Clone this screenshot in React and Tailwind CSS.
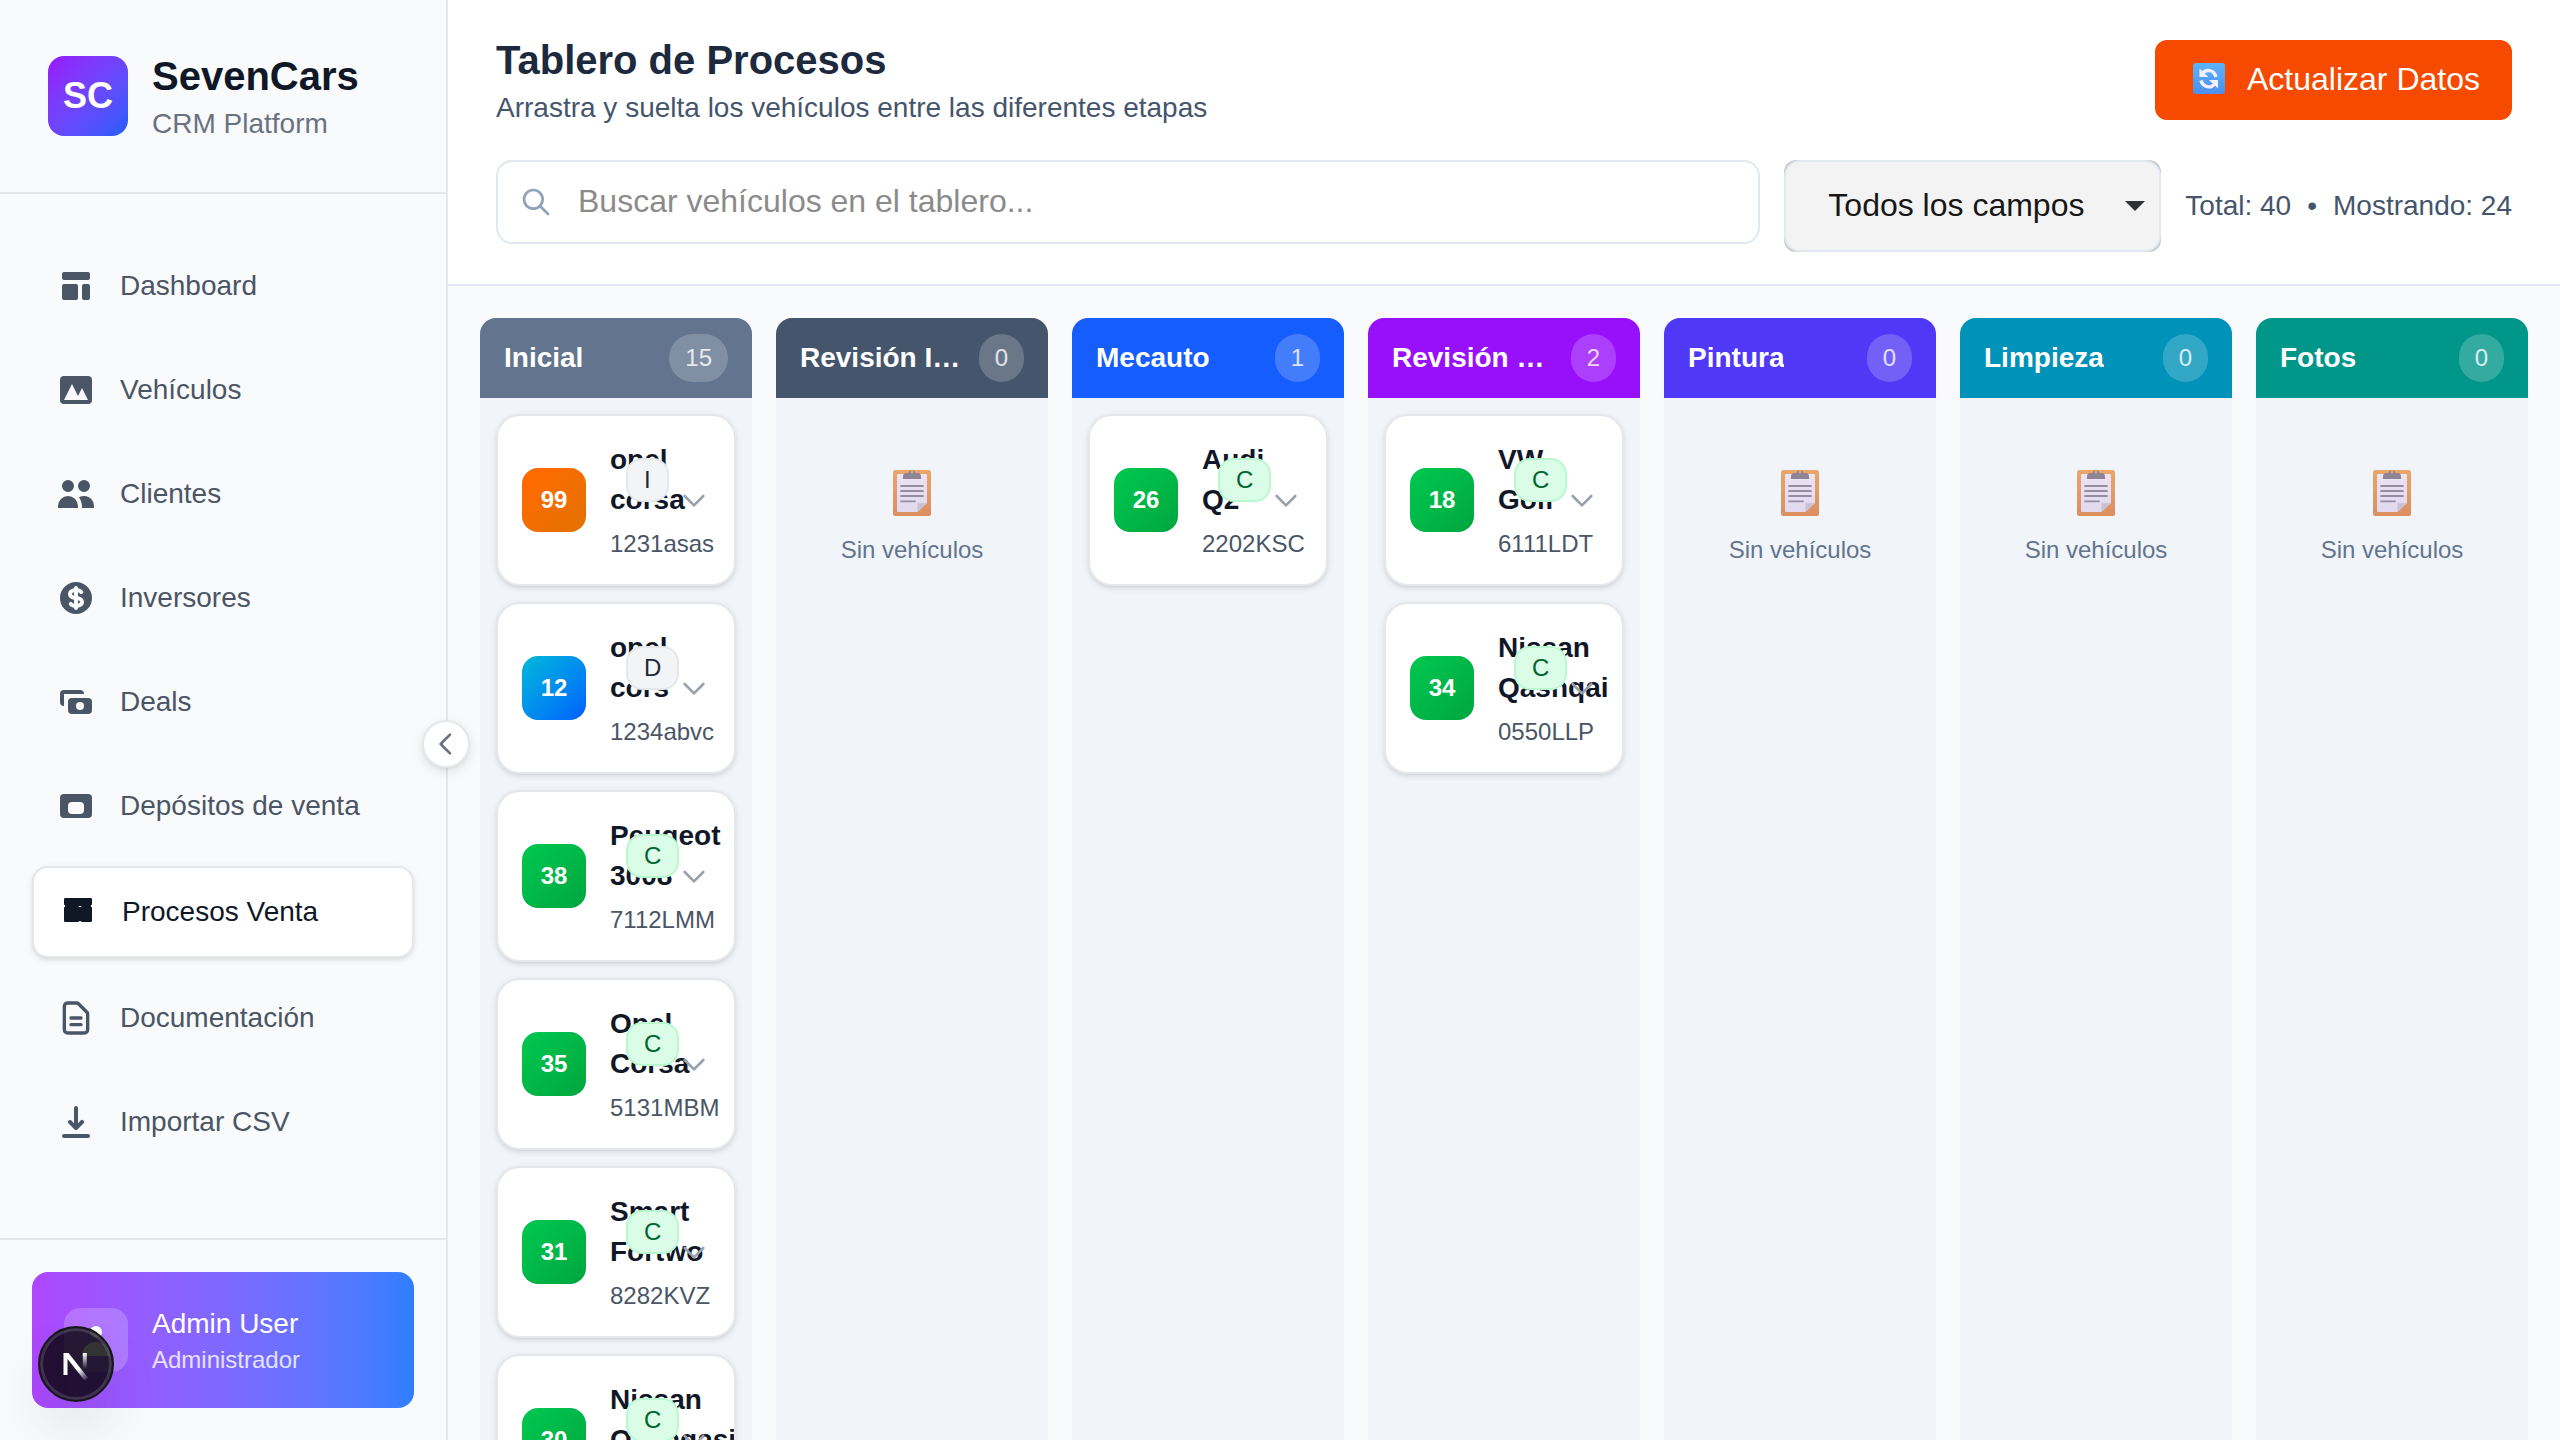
const NAV = [
  {
    label: "Dashboard",
    icon: (
      <path d="M3 4a1 1 0 011-1h12a1 1 0 011 1v2a1 1 0 01-1 1H4a1 1 0 01-1-1V4zM3 10a1 1 0 011-1h6a1 1 0 011 1v6a1 1 0 01-1 1H4a1 1 0 01-1-1v-6zM14 9a1 1 0 00-1 1v6a1 1 0 001 1h2a1 1 0 001-1v-6a1 1 0 00-1-1h-2z" />
    ),
  },
  {
    label: "Vehículos",
    icon: (
      <path
        fillRule="evenodd"
        d="M4 3a2 2 0 00-2 2v10a2 2 0 002 2h12a2 2 0 002-2V5a2 2 0 00-2-2H4zm12 12H4l4-8 3 6 2-4 3 6z"
      />
    ),
  },
  {
    label: "Clientes",
    icon: (
      <path d="M9 6a3 3 0 11-6 0 3 3 0 016 0zM17 6a3 3 0 11-6 0 3 3 0 016 0zM12.93 17c.046-.327.07-.66.07-1a6.97 6.97 0 00-1.5-4.33A5 5 0 0119 16v1h-6.07zM6 11a5 5 0 015 5v1H1v-1a5 5 0 015-5z" />
    ),
  },
  {
    label: "Inversores",
    icon: (
      <>
        <path d="M8.433 7.418c.155-.103.346-.196.567-.267v1.698a2.305 2.305 0 01-.567-.267C8.07 8.34 8 8.114 8 8c0-.114.07-.34.433-.582zM11 12.849v-1.698c.22.071.412.164.567.267.364.243.433.468.433.582 0 .114-.07.34-.433.582a2.305 2.305 0 01-.567.267z" />
        <path
          fillRule="evenodd"
          d="M10 18a8 8 0 100-16 8 8 0 000 16zm1-13a1 1 0 10-2 0v.092a4.535 4.535 0 00-1.676.662C6.602 6.234 6 7.009 6 8c0 .99.602 1.765 1.324 2.246.48.32 1.054.545 1.676.662v1.941c-.391-.127-.68-.317-.843-.504a1 1 0 10-1.51 1.31c.562.649 1.413 1.076 2.353 1.253V15a1 1 0 102 0v-.092a4.535 4.535 0 001.676-.662C13.398 13.766 14 12.991 14 12c0-.99-.602-1.765-1.324-2.246A4.535 4.535 0 0011 9.092V7.151c.391.127.68.317.843.504a1 1 0 101.511-1.31c-.563-.649-1.413-1.076-2.354-1.253V5z"
        />
      </>
    ),
  },
  {
    label: "Deals",
    icon: (
      <path
        fillRule="evenodd"
        d="M4 4a2 2 0 00-2 2v4a2 2 0 002 2V6h10a2 2 0 00-2-2H4zm2 6a2 2 0 012-2h8a2 2 0 012 2v4a2 2 0 01-2 2H8a2 2 0 01-2-2v-4zm6 4a2 2 0 100-4 2 2 0 000 4z"
      />
    ),
  },
  {
    label: "Depósitos de venta",
    icon: (
      <path
        fillRule="evenodd"
        d="M4 4a2 2 0 00-2 2v8a2 2 0 002 2h12a2 2 0 002-2V6a2 2 0 00-2-2H4zm4 4h4a2 2 0 012 2v2a2 2 0 01-2 2H8a2 2 0 01-2-2v-2a2 2 0 012-2z"
      />
    ),
  },
  {
    label: "Procesos Venta",
    active: true,
    icon: (
      <path
        fillRule="evenodd"
        d="M3.6 3h12.8a.6.6 0 01.6.6v2.8a.6.6 0 000 1.200v6.800a.6.6 0 01-.6.6h-4.700a.7.5 0 00-1.400 0H3.600a.6.6 0 01-.6-.6V7.600a.6.6 0 000-1.200V3.600a.6.6 0 01.6-.6zM10.200 7a.8.5 0 001.600 0z"
      />
    ),
  },
  {
    label: "Documentación",
    outline: true,
    icon: (
      <path d="M9 12h6m-6 4h6m2 5H7a2 2 0 01-2-2V5a2 2 0 012-2h5.586a1 1 0 01.707.293l5.414 5.414a1 1 0 01.293.707V19a2 2 0 01-2 2z" />
    ),
  },
  {
    label: "Importar CSV",
    icon: (
      <path
        fillRule="evenodd"
        d="M3 17a1 1 0 011-1h12a1 1 0 110 2H4a1 1 0 01-1-1zm3.293-7.707a1 1 0 011.414 0L9 10.586V3a1 1 0 112 0v7.586l1.293-1.293a1 1 0 111.414 1.414l-3 3a1 1 0 01-1.414 0l-3-3a1 1 0 010-1.414z"
      />
    ),
  },
];

const ORANGE = "from-orange-500 to-amber-600";
const CYAN = "from-cyan-500 to-blue-600";
const GREEN = "from-green-500 to-green-600";

const COLUMNS = [
  {
    title: "Inicial",
    count: 15,
    color: "bg-slate-500",
    cards: [
      { n: 99, name: "opel corsa", plate: "1231asas", status: "I", tone: ORANGE },
      { n: 12, name: "opel cors", plate: "1234abvc", status: "D", tone: CYAN },
      { n: 38, name: "Peugeot 3008", plate: "7112LMM", status: "C", tone: GREEN },
      { n: 35, name: "Opel Corsa", plate: "5131MBM", status: "C", tone: GREEN },
      { n: 31, name: "Smart Fortwo", plate: "8282KVZ", status: "C", tone: GREEN },
      { n: 30, name: "Nissan Qashqasi", plate: "4590LKM", status: "C", tone: GREEN },
    ],
  },
  { title: "Revisión Inicial", count: 0, color: "bg-slate-600", cards: [] },
  {
    title: "Mecauto",
    count: 1,
    color: "bg-blue-600",
    cards: [{ n: 26, name: "Audi Q2", plate: "2202KSC", status: "C", tone: GREEN }],
  },
  {
    title: "Revisión Mecánica",
    count: 2,
    color: "bg-purple-600",
    cards: [
      { n: 18, name: "VW Golf", plate: "6111LDT", status: "C", tone: GREEN },
      { n: 34, name: "Nissan Qashqai", plate: "0550LLP", status: "C", tone: GREEN },
    ],
  },
  { title: "Pintura", count: 0, color: "bg-indigo-600", cards: [] },
  { title: "Limpieza", count: 0, color: "bg-cyan-600", cards: [] },
  { title: "Fotos", count: 0, color: "bg-teal-600", cards: [] },
];

function StrokeIcon({ d, className }) {
  return (
    <svg
      viewBox="0 0 24 24"
      fill="none"
      stroke="currentColor"
      strokeWidth="2"
      strokeLinecap="round"
      strokeLinejoin="round"
      className={className}
      aria-hidden="true"
    >
      <path d={d} />
    </svg>
  );
}

function NavItem({ item }) {
  return (
    <a
      href="#"
      className={
        item.active
          ? "flex items-center gap-6 rounded-2xl border-2 border-gray-200 bg-white p-6 text-gray-900 shadow-[0_2px_6px_rgba(0,0,0,0.1),0_2px_4px_-2px_rgba(0,0,0,0.1)]"
          : "flex items-center gap-6 rounded-2xl p-6 text-gray-600"
      }
    >
      {item.outline ? (
        <svg
          viewBox="0 0 24 24"
          fill="none"
          stroke="currentColor"
          strokeWidth="2"
          strokeLinecap="round"
          strokeLinejoin="round"
          className="size-10 shrink-0"
          aria-hidden="true"
        >
          {item.icon}
        </svg>
      ) : (
        <svg viewBox="0 0 20 20" fill="currentColor" className="size-10 shrink-0" aria-hidden="true">
          {item.icon}
        </svg>
      )}
      <span className="text-[28px] leading-10">{item.label}</span>
    </a>
  );
}

function NextBadge() {
  return (
    <button
      type="button"
      aria-label="Open Next.js Dev Tools"
      className="absolute bottom-[38px] left-[38px] flex size-[76px] items-center justify-center rounded-full border-2 border-[#171717] bg-black/80 shadow-[inset_0_0_0_3px_rgba(255,255,255,0.14),0_32px_64px_-16px_rgba(0,0,0,0.24)]"
    >
      <svg viewBox="0 0 76 76" fill="none" className="size-[76px] shrink-0" aria-hidden="true">
        <defs>
          <linearGradient id="n-diagonal" x1="41" y1="43" x2="50" y2="54" gradientUnits="userSpaceOnUse">
            <stop stopColor="white" />
            <stop offset="1" stopColor="white" stopOpacity="0" />
          </linearGradient>
          <linearGradient id="n-stem" x1="47" y1="27" x2="47" y2="43" gradientUnits="userSpaceOnUse">
            <stop stopColor="white" />
            <stop offset="1" stopColor="white" stopOpacity="0" />
          </linearGradient>
        </defs>
        <path d="M25.500 27h5L50 51.800l-3.400 2.800L29.500 33v16h-4z" fill="url(#n-diagonal)" />
        <path d="M44.800 27h4v17h-4z" fill="url(#n-stem)" />
      </svg>
    </button>
  );
}

function Sidebar() {
  return (
    <aside className="relative z-10 flex w-[448px] shrink-0 flex-col border-r-2 border-gray-200 bg-gray-50">
      <div className="flex items-center gap-6 border-b-2 border-gray-200 p-12">
        <div className="flex size-20 items-center justify-center rounded-2xl bg-linear-to-br from-purple-600 to-blue-600 text-4xl font-bold text-white">
          SC
        </div>
        <div>
          <h2 className="text-[40px] leading-14 font-bold text-gray-900">SevenCars</h2>
          <p className="text-[28px] leading-10 text-gray-500">CRM Platform</p>
        </div>
      </div>
      <nav className="flex flex-1 flex-col gap-4 px-8 py-12">
        {NAV.map((item) => (
          <NavItem key={item.label} item={item} />
        ))}
      </nav>
      <div className="border-t-2 border-gray-200 p-8">
        <div className="flex items-center gap-6 rounded-2xl bg-linear-to-r from-purple-500 to-blue-500 p-8">
          <div className="flex size-16 items-center justify-center rounded-2xl bg-white/20">
            <svg viewBox="0 0 20 20" fill="white" className="size-10" aria-hidden="true">
              <path d="M10 9a3 3 0 100-6 3 3 0 000 6zm-7 9a7 7 0 1114 0H3z" />
            </svg>
          </div>
          <div>
            <p className="text-[28px] leading-10 text-white">Admin User</p>
            <p className="text-2xl text-white/80">Administrador</p>
          </div>
        </div>
      </div>
      <button
        type="button"
        aria-label="Contraer menú"
        className="absolute top-1/2 -right-6 flex size-12 items-center justify-center rounded-full border-2 border-gray-200 bg-white text-gray-500 shadow-[0_4px_12px_rgba(0,0,0,0.1),0_2px_4px_-2px_rgba(0,0,0,0.1)]"
      >
        <StrokeIcon d="M15 19l-7-7 7-7" className="size-8 shrink-0" />
      </button>
      <NextBadge />
    </aside>
  );
}

function RefreshGlyph() {
  return (
    <svg viewBox="0 0 32 32" className="size-8" aria-hidden="true">
      <defs>
        <linearGradient id="refresh-bg" x1="0" y1="0" x2="0" y2="1">
          <stop stopColor="#5cb4fb" />
          <stop offset="1" stopColor="#4d8fee" />
        </linearGradient>
      </defs>
      <rect width="32" height="31" rx="3" fill="url(#refresh-bg)" />
      <g fill="none" stroke="#f4f0ff" strokeWidth="3.4">
        <path d="M10 10C13 6 21 6.500 23 14" />
        <path d="M21 21.500C18 25.500 10 24.500 8 17.500" />
      </g>
      <path d="M6.500 5.500v8.500h9zM25 25.500V17h-9z" fill="#f4f0ff" />
    </svg>
  );
}

function Toolbar() {
  return (
    <header className="border-b-2 border-slate-200 bg-white px-12 py-8">
      <div className="flex items-center justify-between">
        <div>
          <h1 className="text-[40px] leading-14 font-bold text-slate-800">Tablero de Procesos</h1>
          <p className="text-[28px] leading-10 text-slate-600">
            Arrastra y suelta los vehículos entre las diferentes etapas
          </p>
        </div>
        <button
          type="button"
          className="flex h-20 items-center gap-[22px] rounded-xl bg-orange-600 pr-8 pb-[2px] pl-[38px] text-[32px] leading-12 text-white"
        >
          <RefreshGlyph />
          Actualizar Datos
        </button>
      </div>
      <div className="mt-8 flex items-center gap-6">
        <div className="relative flex-1 self-start">
          <input
            type="text"
            aria-label="Buscar vehículos"
            placeholder="Buscar vehículos en el tablero..."
            className="block h-[84px] w-full rounded-2xl border-2 border-slate-200 bg-white pr-8 pb-[2px] pl-20 text-[32px] placeholder:text-[#8b8b8b]"
          />
          <StrokeIcon
            d="M21 21l-6-6m2-5a7 7 0 11-14 0 7 7 0 0114 0z"
            className="pointer-events-none absolute top-1/2 left-6 size-8 -translate-y-1/2 text-slate-400"
          />
        </div>
        <div className="relative rounded-xl bg-[#c8c8c8]">
          <select
            aria-label="Campo de búsqueda"
            className="block h-[92px] appearance-none rounded-2xl border-2 border-slate-200 bg-[#f3f3f3] pr-[74px] pb-[2px] pl-[42px] text-[32px] text-[#171717]"
          >
            <option>Todos los campos</option>
          </select>
          <svg
            viewBox="0 0 20 10"
            className="pointer-events-none absolute top-1/2 right-4 h-[10px] w-5 -translate-y-1/2"
            aria-hidden="true"
          >
            <path d="M0 0h20L10 10z" fill="#2e3436" />
          </svg>
        </div>
        <div className="flex gap-4 text-[28px] leading-10 text-slate-600">
          <span>Total: 40</span>
          <span>•</span>
          <span>Mostrando: 24</span>
        </div>
      </div>
    </header>
  );
}

function VehicleCard({ card }) {
  return (
    <article className="flex items-center gap-6 overflow-hidden rounded-3xl border-2 border-gray-200 bg-white p-6 shadow-[0_2px_6px_rgba(0,0,0,0.1),0_2px_4px_-2px_rgba(0,0,0,0.1)]">
      <div
        className={`flex size-16 shrink-0 items-center justify-center rounded-2xl bg-linear-to-br text-2xl font-bold text-white ${card.tone}`}
      >
        {card.n}
      </div>
      <div className="min-w-0 flex-1">
        <div className="flex items-center gap-4">
          <h3 className="w-0 min-w-0 flex-1 text-[28px] leading-10 font-bold text-gray-900">{card.name}</h3>
          <span
            className={
              card.status === "C"
                ? "shrink-0 rounded-2xl border-2 border-green-200 bg-green-100 px-4 py-1 text-2xl text-green-800"
                : "shrink-0 rounded-2xl border-2 border-gray-200 bg-gray-100 px-4 py-1 text-2xl text-gray-800"
            }
          >
            {card.status}
          </span>
        </div>
        <p className="mt-2 text-2xl text-gray-600">{card.plate}</p>
      </div>
      <StrokeIcon d="M19 9l-7 7-7-7" className="size-8 shrink-0 text-gray-400" />
    </article>
  );
}

function ClipboardGlyph() {
  return (
    <svg viewBox="0 0 38 48" className="h-12 w-[38px]" aria-hidden="true">
      <defs>
        <linearGradient id="board" x1="0" y1="0" x2="0" y2="1">
          <stop stopColor="#e9a66a" />
          <stop offset="1" stopColor="#dc8f5e" />
        </linearGradient>
        <linearGradient id="sheet" x1="0" y1="0" x2="0" y2="1">
          <stop stopColor="#ebe3f3" />
          <stop offset="1" stopColor="#e0d9ee" />
        </linearGradient>
      </defs>
      <rect y="2" width="38" height="46" rx="2.500" fill="url(#board)" />
      <path d="M5 6h28a1 1 0 011 1v28l-9.500 9H5a1 1 0 01-1-1V7a1 1 0 011-1z" fill="url(#sheet)" />
      <path d="M24.500 44v-8a1 1 0 011-1H34z" fill="#c9c0d6" />
      <path
        fillRule="evenodd"
        d="M10 11V8.500A3.500 3.500 0 0113.500 5h2a3.600 3.600 0 017 0h2A3.500 3.500 0 0128 8.500V11zM19 5.500a1.500 1.500 0 100-3 1.500 1.500 0 000 3z"
        fill="#8f8496"
      />
      <path d="M8 18h22M8 23h22M8 28h22M8 33.300h14" stroke="#958c9f" strokeWidth="1.800" strokeLinecap="round" />
    </svg>
  );
}

function EmptyColumn() {
  return (
    <div className="flex flex-col items-center gap-2 py-12 text-2xl text-slate-500">
      <div className="flex h-16 items-start pt-[6px]">
        <ClipboardGlyph />
      </div>
      <p>Sin vehículos</p>
    </div>
  );
}

function Column({ column }) {
  return (
    <section className="flex min-h-0 min-w-0 flex-col">
      <div className={`flex shrink-0 items-center justify-between gap-4 rounded-t-2xl px-6 py-4 ${column.color}`}>
        <h2 className="min-w-0 truncate text-[28px] leading-10 font-bold text-white">{column.title}</h2>
        <span className="rounded-full bg-white/20 px-4 py-2 text-2xl text-white/80">{column.count}</span>
      </div>
      <div className="flex min-h-0 flex-1 flex-col gap-4 overflow-hidden bg-slate-100 p-4">
        {column.cards.length === 0 ? (
          <EmptyColumn />
        ) : (
          column.cards.map((card) => (
            <div key={card.n} className="shrink-0">
              <VehicleCard card={card} />
            </div>
          ))
        )}
      </div>
    </section>
  );
}

export default function App() {
  return (
    <div className="flex h-screen overflow-hidden bg-slate-50 font-['Liberation_Sans',Arial,sans-serif]">
      <Sidebar />
      <main className="flex min-w-0 flex-1 flex-col">
        <Toolbar />
        <div className="grid min-h-0 flex-1 grid-cols-7 grid-rows-1 gap-6 px-8 pt-8">
          {COLUMNS.map((column) => (
            <Column key={column.title} column={column} />
          ))}
        </div>
      </main>
    </div>
  );
}
